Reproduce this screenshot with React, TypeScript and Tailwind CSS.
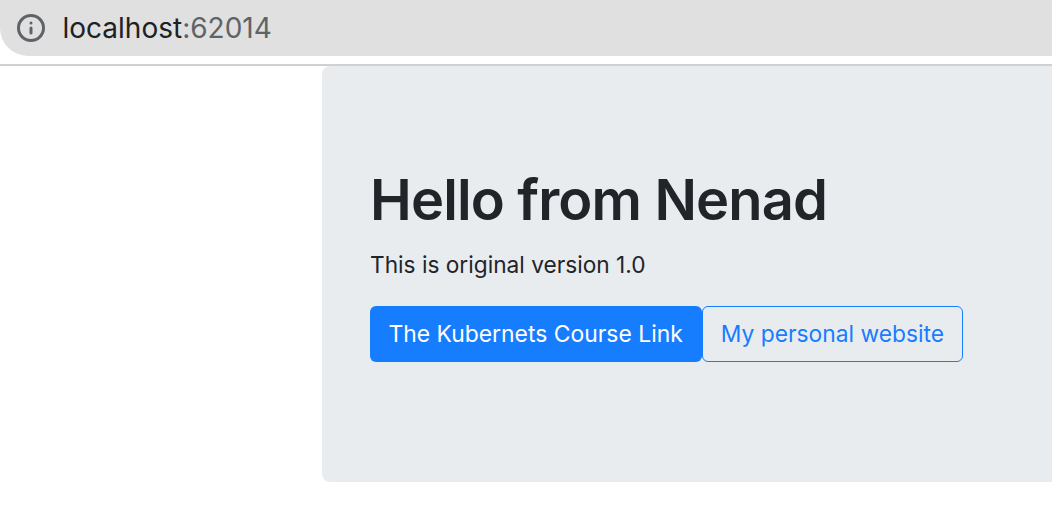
import { Info } from 'lucide-react'

export default function App() {
  return (
    <div className="h-[526px] w-[1052px] overflow-hidden bg-white font-['Inter',sans-serif]">
      {/* browser address bar */}
      <div className="h-[56px] rounded-bl-[28px] bg-[#e0e0e0] flex items-center pl-[16px]">
        <Info size={30} strokeWidth={2.4} className="text-[#5f6368]" />
        <div className="ml-[16.5px] text-[28px] text-[#202124]">
          localhost<span className="text-[#5f6368]">:62014</span>
        </div>
      </div>
      <div className="mt-[8px] h-[2px] bg-[#d0d0d0]" />

      {/* jumbotron */}
      <div className="ml-[322px] h-[416px] rounded-l-[8px] bg-[#e9ecef] pl-[48px] pt-[101px]">
        <h1 className="text-[56px] leading-[67px] font-semibold tracking-[-0.85px] text-[#212529]">Hello from Nenad</h1>
        <p className="mt-[14px] text-[22.7px] leading-[34px] text-[#212529]">This is original version 1.0</p>
        <div className="mt-[24px] flex">
          <a className="h-[56px] rounded-[6px] bg-[#177dff] pl-[18.5px] pr-[19px] pt-px flex items-center text-[22.9px] text-white">The Kubernets Course Link</a>
          <a className="h-[56px] rounded-[6px] border border-[#177dff] pl-[18px] pr-[18px] pt-px flex items-center text-[22.8px] text-[#177dff]">My personal website</a>
        </div>
      </div>
    </div>
  )
}
